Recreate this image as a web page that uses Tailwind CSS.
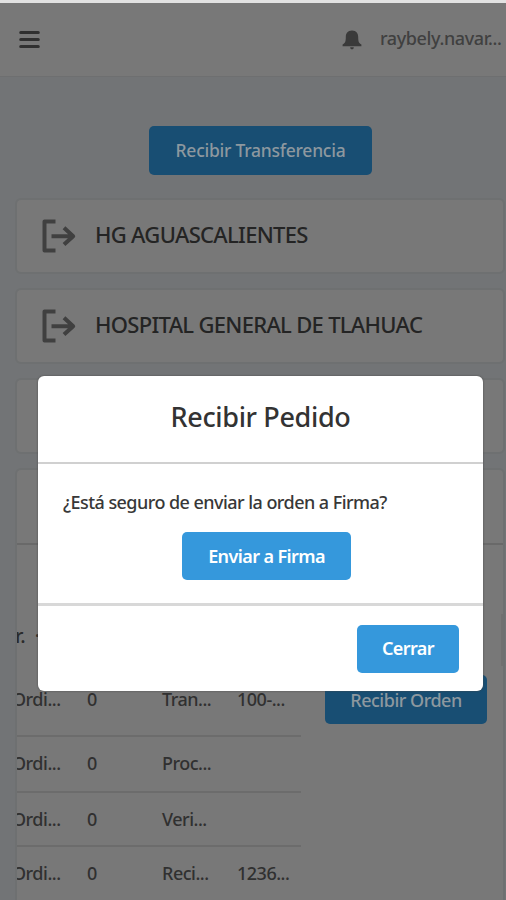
<!DOCTYPE html>
<html lang="es">
<head>
<meta charset="utf-8">
<title>Recibir Pedido</title>
<script src="https://cdn.jsdelivr.net/npm/@tailwindcss/browser@4"></script>
</head>
<body class="relative w-[506px] h-[900px] overflow-hidden bg-[#727476] font-['Noto_Sans',sans-serif] text-[#2b2b2b]">
<header class="h-[77px] border-t-3 border-t-[#e2e2e2] border-b border-b-[#6e6f70] bg-[#787878] flex items-center pl-[19px] pr-[5px]">
  <svg class="w-[21px] h-[19px]" viewBox="0 0 21 19" stroke="#303030" stroke-width="3" stroke-linecap="round"><path d="M1.7 2.5h17.600M1.7 9.500h17.600M1.7 16.500h17.600"/></svg>
  <svg class="ml-auto w-[20px] h-[20px]" viewBox="0 0 20 20" fill="#3a3a3a"><path d="M10 .5C5.500 .5 3.800 3.500 3.800 7c0 4.500-.6 6-3.200 7.500v1.700h18.800v-1.700c-2.600-1.500-3.200-3-3.200-7.500C16.200 3.500 14.500 .5 10 .5zM8.200 17.200h3.600c0 1.400-.7 2.100-1.800 2.100s-1.800-.7-1.800-2.100z"/></svg>
  <span class="ml-[18px] pb-[3px] w-[121px] text-[18px] leading-6 tracking-[-0.4px] whitespace-nowrap font-medium text-[#404040]">raybely.navar...</span>
</header>
<main class="flex flex-col pl-[15px] pr-px">
  <button class="mt-[49px] ml-[134px] w-[223px] h-[49px] shrink-0 rounded-[5px] bg-[#184e73] text-[#8d989f] text-[17.500px] font-medium tracking-[-0.25px] whitespace-nowrap">Recibir Transferencia</button>
  <section class="mt-[23px] h-[76px] shrink-0 rounded-[6px] border-2 border-[#6e7071] bg-[#787878] flex items-center pl-[24px]">
    <svg class="w-[36px] h-[34px]" viewBox="0 0 36 34" fill="none" stroke="#404040" stroke-width="4" stroke-linejoin="round"><path d="M14.500 2.500H3.500v29h11M10.500 17.200h22M23 8.800l9.200 8.400-9.200 8.400"/></svg>
    <span class="ml-[18px] pb-[3px] text-[22px] tracking-[-0.7px] whitespace-nowrap font-medium text-[#242424]">HG AGUASCALIENTES</span>
  </section>
  <section class="mt-[14px] h-[76px] shrink-0 rounded-[6px] border-2 border-[#6e7071] bg-[#787878] flex items-center pl-[24px]">
    <svg class="w-[36px] h-[34px]" viewBox="0 0 36 34" fill="none" stroke="#404040" stroke-width="4" stroke-linejoin="round"><path d="M14.500 2.500H3.500v29h11M10.500 17.200h22M23 8.800l9.200 8.400-9.200 8.400"/></svg>
    <span class="ml-[18px] pb-[3px] text-[22px] tracking-[-0.7px] whitespace-nowrap font-medium text-[#242424]">HOSPITAL GENERAL DE TLAHUAC</span>
  </section>
  <section class="mt-[14px] h-[76px] shrink-0 rounded-[6px] border-2 border-[#6e7071] bg-[#787878]"></section>
  <section class="mt-[14px] h-[440px] shrink-0 rounded-[6px] border-2 border-[#6e7071] bg-[#787878] overflow-hidden">
    <div class="h-[75px] border-b-2 border-[#696969]"></div>
    <div class="h-[128px] pt-[68px] flex justify-between">
      <div class="flex text-[20px] font-medium leading-[46px] -ml-[2px] gap-[9px]"><span>r.</span><span>·</span></div>
      <div class="mt-[1px] w-[2px] h-[52px] bg-[#707070]"></div>
    </div>
    <div class="flex items-start text-[18px] tracking-[-0.5px] whitespace-nowrap font-medium text-[#303030]">
      <div class="w-[284px]">
        <div class="h-[64px] pt-[15px] grid grid-cols-[70px_75px_75px_64px] leading-[22px] border-b-2 border-[#6c6c6c]"><span class="-ml-[5px]">Ordi...</span><span>0</span><span>Tran...</span><span>100-...</span></div>
        <div class="h-[56px] pt-[15px] grid grid-cols-[70px_75px_75px_64px] leading-[22px] border-b-2 border-[#6c6c6c]"><span class="-ml-[5px]">Ordi...</span><span>0</span><span>Proc...</span></div>
        <div class="h-[54px] pt-[15px] grid grid-cols-[70px_75px_75px_64px] leading-[22px] border-b-2 border-[#6c6c6c]"><span class="-ml-[5px]">Ordi...</span><span>0</span><span>Veri...</span></div>
        <div class="h-[54px] pt-[15px] grid grid-cols-[70px_75px_75px_64px] leading-[22px]"><span class="-ml-[5px]">Ordi...</span><span>0</span><span>Reci...</span><span>1236...</span></div>
      </div>
      <button class="ml-[24px] mt-[2px] pt-[2px] w-[162px] h-[49px] rounded-[5px] bg-[#184e73] text-[#8d989f] text-[18px] font-medium tracking-[-0.5px]">Recibir Orden</button>
    </div>
  </section>
</main>
<div role="dialog" class="absolute left-[38px] top-[376px] w-[445px] h-[315px] rounded-[6px] bg-white shadow-[0_0_2px_#444] flex flex-col">
  <h2 class="h-[88px] shrink-0 border-b-2 border-[#d0d0d0] pt-[22px] text-center text-[27px] font-medium leading-[38px] tracking-[-0.35px] whitespace-nowrap text-[#333]">Recibir Pedido</h2>
  <div class="h-[142px] shrink-0 border-b-3 border-[#d8d8d8] pt-[25px] flex flex-col">
    <p class="pl-[25px] text-[18px] font-medium leading-[26px] tracking-[-0.55px] whitespace-nowrap text-[#383838]">¿Está seguro de enviar la orden a Firma?</p>
    <button class="mt-[17px] ml-[144px] w-[169px] h-[48px] shrink-0 rounded-[5px] bg-[#3598dc] text-white text-[18px] font-semibold tracking-[-0.6px] whitespace-nowrap">Enviar a Firma</button>
  </div>
  <div class="pt-[19px] pr-[24px] flex justify-end">
    <button class="pb-[2px] w-[102px] h-[48px] rounded-[5px] bg-[#3598dc] text-white text-[18px] font-semibold tracking-[-0.6px]">Cerrar</button>
  </div>
</div>
</body>
</html>
